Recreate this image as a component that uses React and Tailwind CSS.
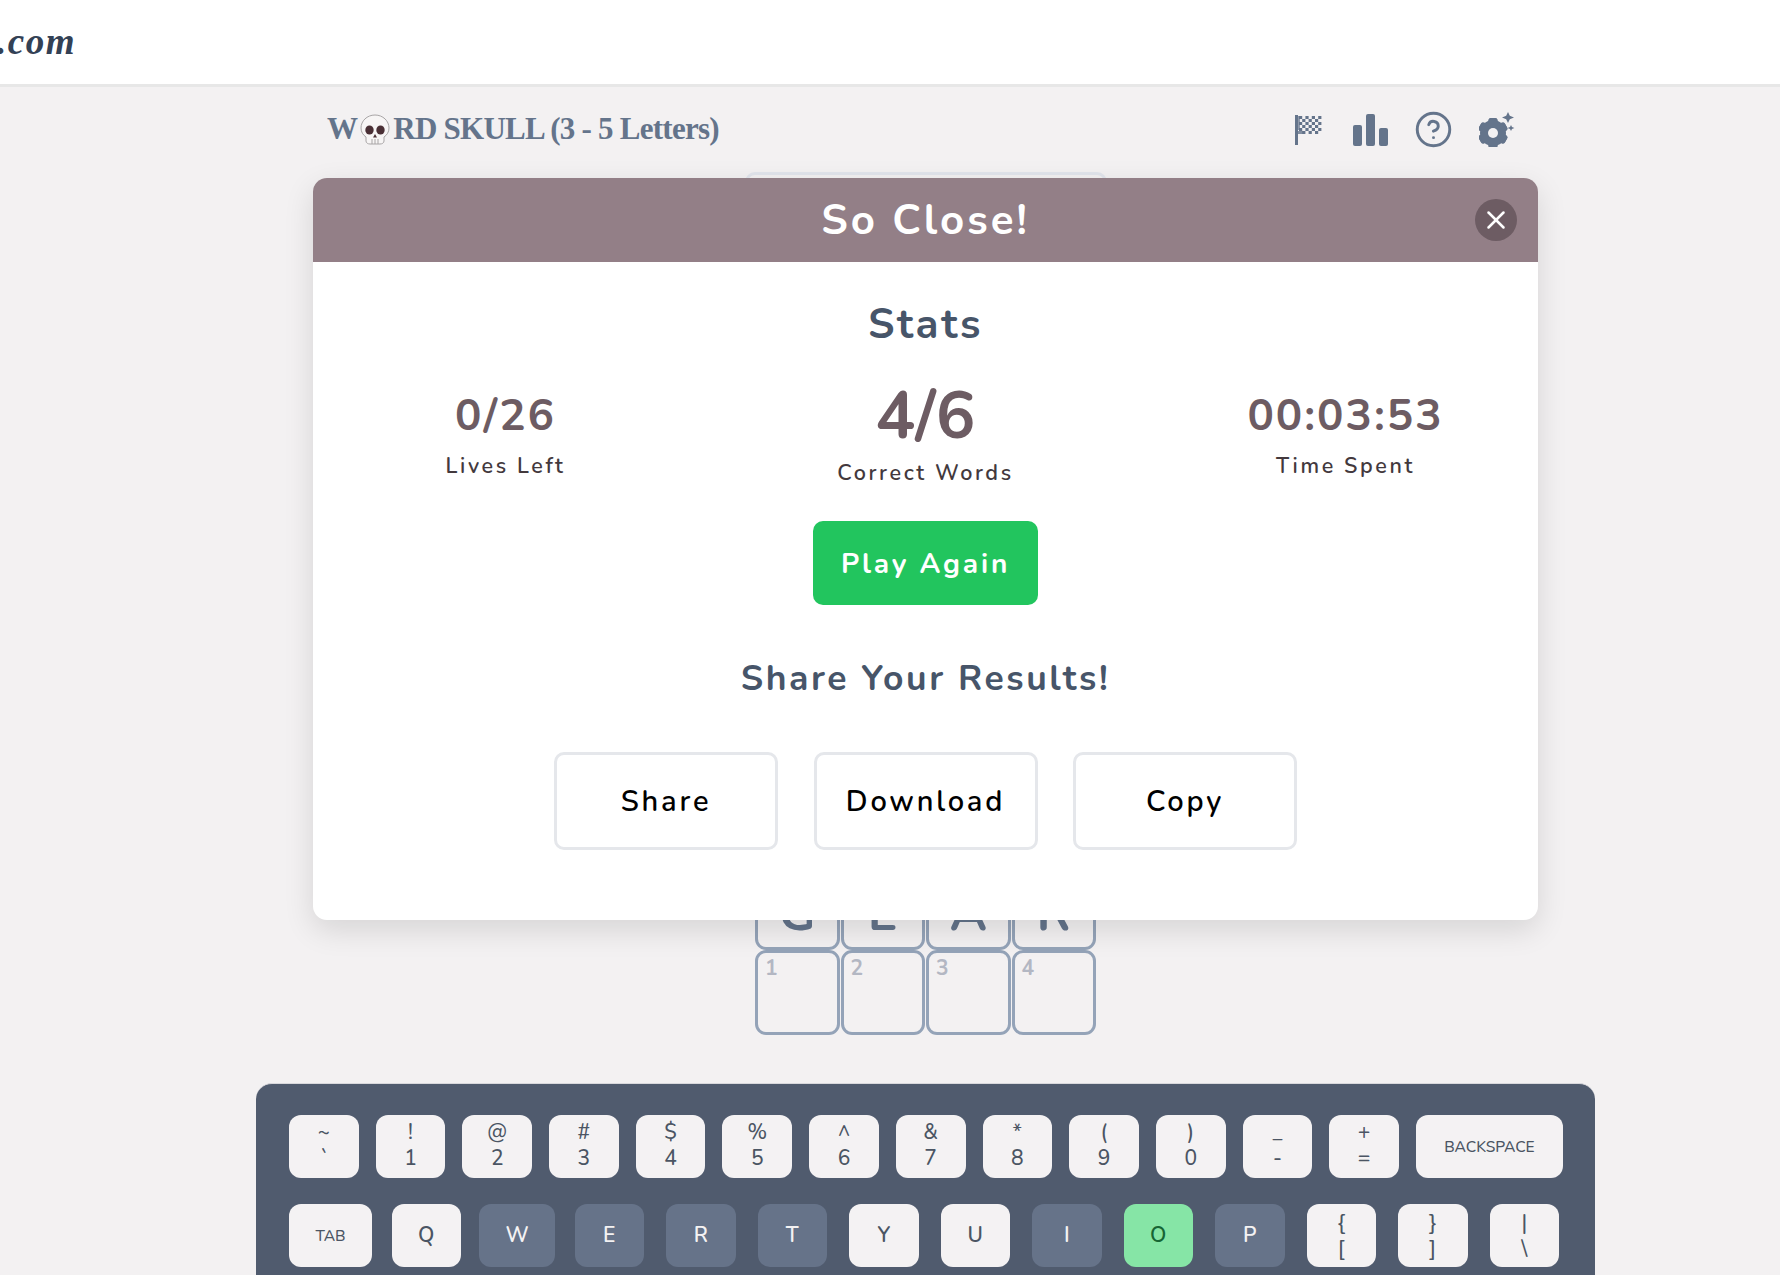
import { X, CircleHelp } from 'lucide-react';

const sans = "font-['Nunito','Noto_Sans',sans-serif]";

const row1 = [
  ['~', '`'], ['!', '1'], ['@', '2'], ['#', '3'], ['$', '4'], ['%', '5'], ['^', '6'],
  ['&', '7'], ['*', '8'], ['(', '9'], [')', '0'], ['_', '-'], ['+', '='],
];

const row2 = [
  { label: 'Q', shift: '-ml-[2.5px]' },
  { label: 'W', state: 'used', wide: true, shift: '-ml-[4px]' },
  { label: 'E', state: 'used', shift: '-ml-[2.5px]' },
  { label: 'R', state: 'used' },
  { label: 'T', state: 'used' },
  { label: 'Y' },
  { label: 'U' },
  { label: 'I', state: 'used' },
  { label: 'O', state: 'hit' },
  { label: 'P', state: 'used' },
];

const FlagIcon = () => (
  <svg width="27" height="30" viewBox="0 0 27 30" fill="#64748b">
    <rect x="0" y="0" width="3" height="30" />
    {[0, 1, 2, 3, 4, 5].map((r) =>
      [0, 1, 2, 3, 4, 5, 6].map((c) =>
        (r + c) % 2 === 0 ? <rect key={`${r}-${c}`} x={4 + c * 3.2} y={1 + r * 3} width="3.2" height="3" /> : null
      )
    )}
    <rect x="3" y="1" width="2" height="14" opacity="0.7" />
    <rect x="3" y="16" width="7" height="3" opacity="0.8" />
  </svg>
);

const BarsIcon = () => (
  <svg width="35" height="32" viewBox="0 0 35 32" fill="#64748b">
    <rect x="0" y="11" width="9" height="21" rx="2" />
    <rect x="13" y="0" width="9" height="32" rx="2" />
    <rect x="26" y="14" width="9" height="18" rx="2" />
  </svg>
);

const GearIcon = () => (
  <svg width="36" height="35" viewBox="0 0 36 35" fill="#64748b">
    {[0, 60, 120, 180, 240, 300].map((a) => (
      <rect key={a} x="9.5" y="6" width="9" height="30" rx="2.5" transform={`rotate(${a} 14 21)`} />
    ))}
    <circle cx="14" cy="21" r="9.5" fill="none" stroke="#64748b" strokeWidth="7" />
    <circle cx="14" cy="21" r="5" fill="#f3f1f2" />
    <path d="M29 0l1.8 3.7L35 5.5l-4.2 1.8L29 11l-1.8-3.7L23 5.5l4.2-1.8z" />
    <path d="M32 13l1 2 2.4 1-2.4 1-1 2-1-2-2.4-1 2.4-1z" />
  </svg>
);

const Skull = () => (
  <svg width="30" height="31" viewBox="0 0 30 31" className="mx-[3px]">
    <path
      d="M15 1C7 1 1 7 1 14c0 4 2 7 5 9v4c0 2 2 3 4 3h10c2 0 4-1 4-3v-4c3-2 5-5 5-9 0-7-6-13-14-13z"
      fill="#f7f5f5"
      stroke="#a8a5a6"
      strokeWidth="1"
    />
    <ellipse cx="9.5" cy="16" rx="4.2" ry="4.6" fill="#4a2f35" />
    <ellipse cx="20.5" cy="16" rx="4.2" ry="4.6" fill="#4a2f35" />
    <path d="M15 20l2 3.5h-4z" fill="#4a2f35" />
    <path d="M12 25v5M15 25v5M18 25v5" stroke="#a8a5a6" strokeWidth="1" fill="none" />
  </svg>
);

const Tile = ({ num, letter }) => (
  <div className="relative flex h-[85px] w-[84.5px] items-center justify-center rounded-[11px] border-[3px] border-[#94a3b8]">
    {num && <span className="absolute left-[7px] top-0 text-[21px] font-bold text-[#b3b7c3]">{num}</span>}
    {letter && <span className="mt-[12px] text-[50px] font-bold leading-none text-[#64748b]">{letter}</span>}
  </div>
);

const Key = ({ children, className = '', color = 'bg-[#f4f2f3] text-[#4b5563]' }) => (
  <div className={`flex h-[63px] items-center justify-center rounded-[12px] ${color} ${className}`}>
    {children}
  </div>
);

const keyColor = {
  used: 'bg-[#667389] text-[#f4f2f3] font-bold',
  hit: 'bg-[#86e5a6] text-[#166534] font-semibold',
};

const Stat = ({ value, label }) => (
  <div className="flex flex-col items-center pt-[9px]">
    <div className="text-[44px] font-bold leading-[52px] tracking-[2px] text-[#6d5c63]">{value}</div>
    <div className="mt-[10px] text-[21.5px] font-semibold leading-[28px] tracking-[2.6px] text-[#43393d]">{label}</div>
  </div>
);

const ShareButton = ({ children }) => (
  <button className="h-[98px] w-[224px] rounded-[10px] border-[3px] border-[#e5e7eb] bg-white pt-[1px] text-[29px] font-semibold tracking-[2.8px] text-black">
    {children}
  </button>
);

export default function App() {
  return (
    <div className={`relative h-[1275px] w-[1780px] overflow-hidden bg-[#f3f1f2] ${sans}`}>
      <header className="flex h-[87px] items-center border-b-[3px] border-[#e7e7e7] bg-white">
        <span className="-ml-[3px] font-['Liberation_Serif',serif] text-[37px] font-bold italic tracking-[1.5px] text-[#334155]">.com</span>
      </header>

      <main className="ml-[256px] w-[1339px]">
        <div className="flex h-[85px] items-center justify-between pl-[71px] pr-[80px]">
          <h1 className="flex items-center font-['Liberation_Serif',serif] text-[31px] font-bold tracking-[-0.75px] text-[#64748b]">
            W<Skull />RD SKULL (3 - 5 Letters)
          </h1>
          <div className="flex items-center gap-[31px]">
            <FlagIcon />
            <BarsIcon />
            <CircleHelp size={39} strokeWidth={1.8} color="#64748b" className="-mx-[5px]" />
            <GearIcon />
          </div>
        </div>

        <div className="flex h-[693px] justify-center">
          <div className="h-[90px] w-[362px] rounded-t-[10px] border-[3px] border-[#e2e5ec]" />
        </div>

        <div className="flex flex-col items-center">
          <div className="flex gap-[1px]">
            {['G', 'E', 'A', 'R'].map((l) => <Tile key={l} letter={l} />)}
          </div>
          <div className="flex gap-[1px]">
            {['1', '2', '3', '4'].map((n) => <Tile key={n} num={n} />)}
          </div>
        </div>

        <section className="mt-[48px] h-[250px] rounded-[16px] border-t border-[#d8d8dc] bg-[#505b6e] pl-[33px] pr-[32px] pt-[31px]">
          <div className="flex gap-[17px]">
            {row1.map(([top, bottom]) => (
              <Key key={bottom} className="flex-1 flex-col pb-[3px] text-[21px] font-medium leading-[26px]">
                <span>{top}</span>
                <span>{bottom}</span>
              </Key>
            ))}
            <Key className="w-[147px] text-[15.5px] font-medium">BACKSPACE</Key>
          </div>

          <div className="mt-[26px] flex gap-[22px]">
            <Key className="w-[83px] text-[15.5px] font-medium">TAB</Key>
            {row2.map((k) => (
              <Key
                key={k.label}
                color={keyColor[k.state]}
                className={`${k.wide ? 'w-[76px]' : 'w-[69.5px]'} ${k.shift || ''} text-[21px] font-semibold`}
              >
                {k.label}
              </Key>
            ))}
            {[['{', '['], ['}', ']'], ['|', '\\']].map(([top, bottom]) => (
              <Key key={bottom} className="w-[69.5px] flex-col text-[21px] font-medium leading-[26px]">
                <span>{top}</span>
                <span>{bottom}</span>
              </Key>
            ))}
          </div>
        </section>
      </main>

      <div className="absolute left-[313px] top-[178px] h-[742px] w-[1225px] rounded-[14px] bg-white shadow-[0_10px_30px_rgba(0,0,0,0.12)]">
        <div className="relative flex h-[84px] items-center justify-center rounded-t-[14px] bg-[#937f87]">
          <span className="text-[42px] font-bold tracking-[3px] text-white">So Close!</span>
          <button className="absolute right-[21px] top-[21px] flex h-[42px] w-[42px] items-center justify-center rounded-full bg-[#6d5c63]">
            <X size={30} color="#ffffff" strokeWidth={2} />
          </button>
        </div>

        <div className="flex flex-col items-center">
          <div className="mt-[38px] text-[42px] font-bold leading-[50px] tracking-[2.6px] text-[#475569]">Stats</div>

          <div className="mt-[31px] grid w-full grid-cols-3 gap-[81px] px-[23px]">
            <Stat value="0/26" label="Lives Left" />
            <div className="flex flex-col items-center">
              <div className="-mt-[1px] text-[66px] font-bold leading-[72px] text-[#6d5c63]">4/6</div>
              <div className="mt-[7px] text-[21.5px] font-semibold leading-[28px] tracking-[2.6px] text-[#43393d]">Correct Words</div>
            </div>
            <Stat value="00:03:53" label="Time Spent" />
          </div>

          <button className="mt-[34px] h-[84px] w-[225px] rounded-[10px] bg-[#22c55e] pt-[1px] text-[28px] font-bold tracking-[2.8px] text-white">
            Play Again
          </button>

          <div className="mt-[52px] text-[35.5px] font-bold leading-[44px] tracking-[2.6px] text-[#475569]">Share Your Results!</div>

          <div className="mt-[51px] flex gap-[35.5px]">
            <ShareButton>Share</ShareButton>
            <ShareButton>Download</ShareButton>
            <ShareButton>Copy</ShareButton>
          </div>
        </div>
      </div>
    </div>
  );
}
